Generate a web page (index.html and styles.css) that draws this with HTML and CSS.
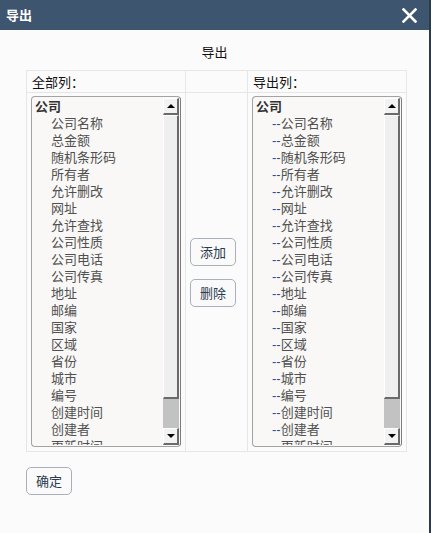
FILE: index.html
```html
<!DOCTYPE html>
<html>
<head>
<meta charset="utf-8">
<link rel="stylesheet" href="styles.css">
</head>
<body>
<div class="dialog">
  <div class="titlebar">
    <span class="title">导出</span>
    <svg class="close" width="15" height="15" viewBox="0 0 15 15"><path d="M1.5 1.5 L13.5 13.5 M13.5 1.5 L1.5 13.5" stroke="#fff" stroke-width="2.6" stroke-linecap="square"/></svg>
  </div>
  <div class="heading">导出</div>
  <div class="grid">
    <div class="cell head">全部列：</div>
    <div class="cell head"></div>
    <div class="cell head">导出列：</div>

    <div class="cell listcell">
      <div class="listbox">
        <div class="items">
          <div class="group">公司</div>
          <div class="item">公司名称</div>
          <div class="item">总金额</div>
          <div class="item">随机条形码</div>
          <div class="item">所有者</div>
          <div class="item">允许删改</div>
          <div class="item">网址</div>
          <div class="item">允许查找</div>
          <div class="item">公司性质</div>
          <div class="item">公司电话</div>
          <div class="item">公司传真</div>
          <div class="item">地址</div>
          <div class="item">邮编</div>
          <div class="item">国家</div>
          <div class="item">区域</div>
          <div class="item">省份</div>
          <div class="item">城市</div>
          <div class="item">编号</div>
          <div class="item">创建时间</div>
          <div class="item">创建者</div>
          <div class="item">更新时间</div>
        </div>
        <div class="scrollbar">
          <div class="sbtn"><span class="arrow-up"></span></div>
          <div class="thumb"></div>
          <div class="track"></div>
          <div class="sbtn"><span class="arrow-down"></span></div>
        </div>
      </div>
    </div>

    <div class="cell actions">
      <button class="btn">添加</button>
      <button class="btn">删除</button>
    </div>

    <div class="cell listcell">
      <div class="listbox">
        <div class="items">
          <div class="group">公司</div>
          <div class="item"><span class="dash">--</span>公司名称</div>
          <div class="item"><span class="dash">--</span>总金额</div>
          <div class="item"><span class="dash">--</span>随机条形码</div>
          <div class="item"><span class="dash">--</span>所有者</div>
          <div class="item"><span class="dash">--</span>允许删改</div>
          <div class="item"><span class="dash">--</span>网址</div>
          <div class="item"><span class="dash">--</span>允许查找</div>
          <div class="item"><span class="dash">--</span>公司性质</div>
          <div class="item"><span class="dash">--</span>公司电话</div>
          <div class="item"><span class="dash">--</span>公司传真</div>
          <div class="item"><span class="dash">--</span>地址</div>
          <div class="item"><span class="dash">--</span>邮编</div>
          <div class="item"><span class="dash">--</span>国家</div>
          <div class="item"><span class="dash">--</span>区域</div>
          <div class="item"><span class="dash">--</span>省份</div>
          <div class="item"><span class="dash">--</span>城市</div>
          <div class="item"><span class="dash">--</span>编号</div>
          <div class="item"><span class="dash">--</span>创建时间</div>
          <div class="item"><span class="dash">--</span>创建者</div>
          <div class="item"><span class="dash">--</span>更新时间</div>
        </div>
        <div class="scrollbar">
          <div class="sbtn"><span class="arrow-up"></span></div>
          <div class="thumb"></div>
          <div class="track"></div>
          <div class="sbtn"><span class="arrow-down"></span></div>
        </div>
      </div>
    </div>
  </div>
  <div class="footer">
    <button class="btn">确定</button>
  </div>
</div>
</body>
</html>
```

FILE: styles.css
```css
html, body {
  margin: 0;
  padding: 0;
  background: #2f3a45;
  height: 533px;
  overflow: hidden;
}
body {
  font-family: "Noto Sans CJK SC", "Noto Sans", sans-serif;
  font-size: 13px;
  color: #222;
}
.dialog {
  width: 429px;
  height: 533px;
  background: #fbfbfb;
}
.titlebar {
  height: 30px;
  background: #3d556e;
  display: flex;
  align-items: center;
  justify-content: space-between;
  padding: 0 12px 0 6px;
  box-sizing: border-box;
}
.title {
  color: #fff;
  font-weight: bold;
  font-size: 13px;
  line-height: 16px;
}
.close {
  display: block;
  margin-top: 1px;
}
.heading {
  text-align: center;
  font-size: 13px;
  line-height: 16px;
  margin-top: 14px;
  color: #111;
}
.grid {
  margin: 10px 0 0 26px;
  width: 381px;
  box-sizing: border-box;
  display: grid;
  grid-template-columns: 158px 61px 158px;
  grid-template-rows: 21px 358px;
  gap: 1px;
  padding: 1px;
  background: #e6e6e6;
}
.cell {
  background: #fbfbfb;
}
.head {
  font-size: 13px;
  line-height: 21px;
  padding-left: 5px;
  color: #111;
}
.listcell {
  padding: 3px 0 0 4px;
}
.listbox {
  width: 150px;
  height: 351px;
  box-sizing: border-box;
  border: 1px solid #a3a3a3;
  border-right-color: #7c7c7c;
  border-radius: 4px;
  background: #f9f8f6;
  display: flex;
  overflow: hidden;
  padding: 1px 1px 1px 0;
}
.items {
  flex: 1;
  overflow: hidden;
  padding-left: 3px;
  margin-top: -1px;
}
.group {
  font-weight: bold;
  line-height: 17px;
  color: #333;
}
.item {
  line-height: 17px;
  height: 17px;
  padding-left: 16px;
  color: #505050;
  white-space: nowrap;
}
.dash {
  font-family: "Liberation Sans", sans-serif;
  color: #2c4a9a;
  line-height: 8px;
}
.scrollbar {
  width: 16px;
  display: flex;
  flex-direction: column;
}
.sbtn {
  height: 17px;
  background: #f2f2f2;
  box-sizing: border-box;
  border-top: 1px solid #fff;
  border-left: 1px solid #fff;
  border-right: 2px solid #6a6a6a;
  border-bottom: 2px solid #6a6a6a;
  display: flex;
  align-items: center;
  justify-content: center;
}
.arrow-up {
  width: 0;
  height: 0;
  border-left: 4px solid transparent;
  border-right: 4px solid transparent;
  border-bottom: 4px solid #000;
}
.arrow-down {
  width: 0;
  height: 0;
  border-left: 4px solid transparent;
  border-right: 4px solid transparent;
  border-top: 4px solid #000;
}
.thumb {
  height: 284px;
  background: #efefef;
  box-sizing: border-box;
  border-top: 1px solid #fff;
  border-left: 1px solid #fff;
  border-right: 2px solid #6a6a6a;
  border-bottom: 2px solid #6a6a6a;
}
.track {
  flex: 1;
  background: #c2c2c2;
}
.actions {
  display: flex;
  flex-direction: column;
  justify-content: center;
  align-items: flex-start;
  gap: 13px;
  padding-left: 4px;
}
.btn {
  font-family: "Noto Sans CJK SC", "Noto Sans", sans-serif;
  font-size: 13px;
  color: #2b3a4e;
  background: #fafafa;
  border: 1px solid #a9b0ba;
  border-radius: 5px;
  width: 46px;
  height: 28px;
  padding: 0;
  line-height: 26px;
}
.footer {
  padding: 15px 0 0 26px;
}
```
